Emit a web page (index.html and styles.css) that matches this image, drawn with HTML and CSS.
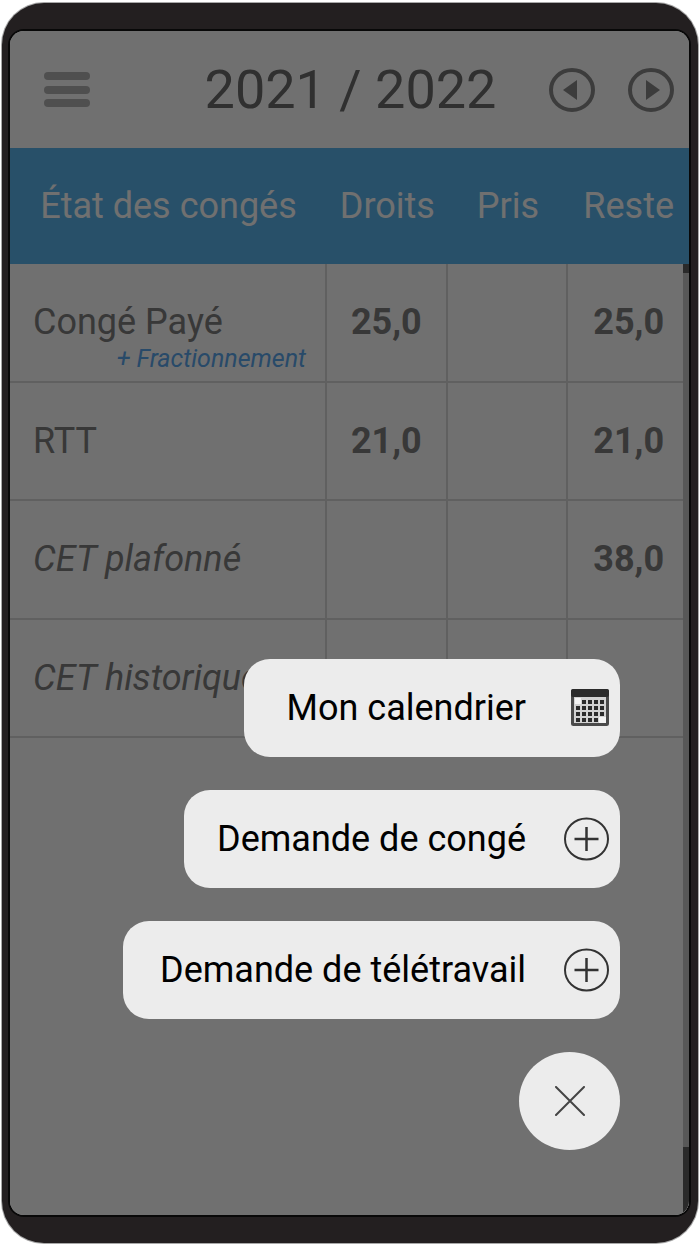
FILE: index.html
```html
<!DOCTYPE html>
<html lang="fr">
<head>
  <meta charset="UTF-8" />
  <meta name="viewport" content="width=device-width, initial-scale=1" />
  <title>État des congés</title>
  <link rel="stylesheet" href="styles.css">
</head>
<body>
  <div class="phone">
    <div class="screen">
      <header class="topbar">
        <button class="icon-btn" type="button" aria-label="Menu">
          <svg width="46" height="36" viewBox="0 0 46 36" fill="#b4b4b4">
            <rect x="0" y="0" width="46" height="8" rx="4" />
            <rect x="0" y="14" width="46" height="8" rx="4" />
            <rect x="0" y="27" width="46" height="8" rx="4" />
          </svg>
        </button>
        <h1 class="title">2021 / 2022</h1>
        <div class="year-nav">
          <button class="icon-btn" type="button" aria-label="Année précédente">
            <svg width="46" height="46" viewBox="0 0 46 46">
              <ellipse cx="23" cy="23" rx="21" ry="20" fill="none" stroke="#8a8a8a" stroke-width="4" />
              <path d="M14 23 L28 13 V33 Z" fill="#8a8a8a" />
            </svg>
          </button>
          <button class="icon-btn" type="button" aria-label="Année suivante">
            <svg width="46" height="46" viewBox="0 0 46 46">
              <ellipse cx="23" cy="23" rx="21" ry="20" fill="none" stroke="#8a8a8a" stroke-width="4" />
              <path d="M32 23 L18 13 V33 Z" fill="#8a8a8a" />
            </svg>
          </button>
        </div>
      </header>

      <table class="leave-table">
        <thead>
          <tr>
            <th class="col-name">État des congés</th>
            <th>Droits</th>
            <th>Pris</th>
            <th>Reste</th>
          </tr>
        </thead>
        <tbody>
          <tr>
            <td class="name">Congé Payé <a class="extra" href="#">+ Fractionnement</a></td>
            <td>25,0</td>
            <td></td>
            <td>25,0</td>
          </tr>
          <tr>
            <td class="name">RTT</td>
            <td>21,0</td>
            <td></td>
            <td>21,0</td>
          </tr>
          <tr>
            <td class="name cet">CET plafonné</td>
            <td></td>
            <td></td>
            <td>38,0</td>
          </tr>
          <tr>
            <td class="name cet">CET historique</td>
            <td></td>
            <td></td>
            <td></td>
          </tr>
        </tbody>
      </table>

      <div class="scrollbar"></div>
      <div class="overlay"></div>

      <!-- Floating menu -->
      <nav class="fab-menu">
        <button class="fab-item calendar" type="button">
          Mon calendrier
          <svg class="fab-icon" width="45" height="38" viewBox="0 0 45 38">
            <rect x="8.5" y="1.5" width="35" height="34" rx="1" fill="#d2d2d2" stroke="#4a4a4a" stroke-width="3" />
            <rect x="7" y="0" width="38" height="8" rx="2" fill="#2b2b2b" />
            <path d="M11 9 H17 V15 H11 Z M35 28 H42 V34 H35 Z" fill="#f4f4f4" />
            <g stroke="#2b2b2b" stroke-width="4" stroke-dasharray="4 2">
              <path d="M18 13 H41" />
              <path d="M12 19 H41" />
              <path d="M12 25 H41" />
              <path d="M12 31 H34" />
            </g>
          </svg>
        </button>
        <button class="fab-item leave" type="button">
          Demande de congé
          <svg class="fab-icon" width="45" height="44" viewBox="0 0 45 44" fill="none" stroke="#333">
            <ellipse cx="22.5" cy="22" rx="21.5" ry="20.5" stroke-width="2" />
            <path d="M22.5 10 V34 M10.5 22 H34.5" stroke-width="2.5" />
          </svg>
        </button>
        <button class="fab-item remote" type="button">
          Demande de télétravail
          <svg class="fab-icon" width="45" height="44" viewBox="0 0 45 44" fill="none" stroke="#333">
            <ellipse cx="22.5" cy="22" rx="21.5" ry="20.5" stroke-width="2" />
            <path d="M22.5 10 V34 M10.5 22 H34.5" stroke-width="2.5" />
          </svg>
        </button>
        <button class="fab-close" type="button" aria-label="Fermer">
          <svg width="32" height="30" viewBox="0 0 32 30" stroke="#444" stroke-width="2" stroke-linecap="round">
            <path d="M2 1 L30 29 M30 1 L2 29" />
          </svg>
        </button>
      </nav>
    </div>
  </div>
</body>
</html>
```
FILE: styles.css
```css
* {
  box-sizing: border-box;
}

body {
  display: flex;
  height: 100vh;
  margin: 0;
  padding: 3px 2px 1px;
  background: #fff;
  font-family: Roboto, "Liberation Sans", sans-serif;
  font-size: 36px;
  color: #808080;
}

.phone {
  flex: 1;
  padding: 28px 9px 28px 8px;
  background: #231f20;
  border-radius: 42px;
  box-shadow: 0 0 0 1px #a8a8a8;
}

.screen {
  position: relative;
  height: 100%;
  background: #fff;
  border-radius: 14px;
  overflow: hidden;
  box-shadow: 0 0 0 2px #080808;
}

button {
  border: none;
  font: inherit;
  cursor: pointer;
}

svg {
  display: block;
}

/* Top bar */
.topbar {
  display: flex;
  align-items: center;
  justify-content: space-between;
  height: 117px;
  padding: 0 15px 0 34px;
}

.icon-btn {
  padding: 0;
  background: none;
}

.title {
  flex: 1;
  margin: 0;
  padding-left: 72px;
  font-size: 54px;
  font-weight: 400;
  text-align: center;
  color: #6d6d6d;
}

.year-nav {
  display: flex;
  gap: 33px;
  padding-left: 10px;
}

/* Table */
.leave-table {
  width: 100%;
  height: 590px;
  table-layout: fixed;
  border-collapse: separate;
  border-spacing: 0;
}

th {
  height: 116px;
  padding: 0;
  background: #5bb6ef;
  color: #fff;
  font-weight: 400;
}

.col-name {
  width: 317px;
}

td {
  padding: 0;
  border-right: 2px solid #dadada;
  border-bottom: 2px solid #dadada;
  text-align: center;
  font-weight: 700;
}

td:last-child {
  border-right: none;
}

.name {
  position: relative;
  padding-left: 23px;
  text-align: left;
  font-weight: 400;
}

.cet {
  font-style: italic;
}

.extra {
  position: absolute;
  right: 19px;
  bottom: 8px;
  font-size: 25px;
  font-style: italic;
  color: #5ba8ef;
  text-decoration: none;
}

.scrollbar {
  position: absolute;
  top: 233px;
  right: 0;
  bottom: 0;
  width: 6px;
  background: #c8c8c8;
  border-top: 9px solid #606060;
  border-bottom: 68px solid #606060;
}

.overlay {
  position: absolute;
  inset: 0;
  background: rgba(0, 0, 0, 0.56);
}

/* Floating menu */
.fab-menu {
  position: absolute;
  right: 69px;
  bottom: 65px;
  display: flex;
  flex-direction: column;
  align-items: flex-end;
  gap: 33px;
}

.fab-item {
  display: flex;
  align-items: center;
  justify-content: flex-end;
  gap: 38px;
  height: 98px;
  padding: 0 11px;
  background: #ececec;
  border-radius: 26px;
  color: #000;
  white-space: nowrap;
}

.calendar {
  width: 376px;
}

.leave {
  width: 436px;
}

.remote {
  width: 497px;
}

.fab-close {
  display: flex;
  align-items: center;
  justify-content: center;
  width: 101px;
  height: 98px;
  padding: 0;
  background: #ececec;
  border-radius: 50%;
}
```
